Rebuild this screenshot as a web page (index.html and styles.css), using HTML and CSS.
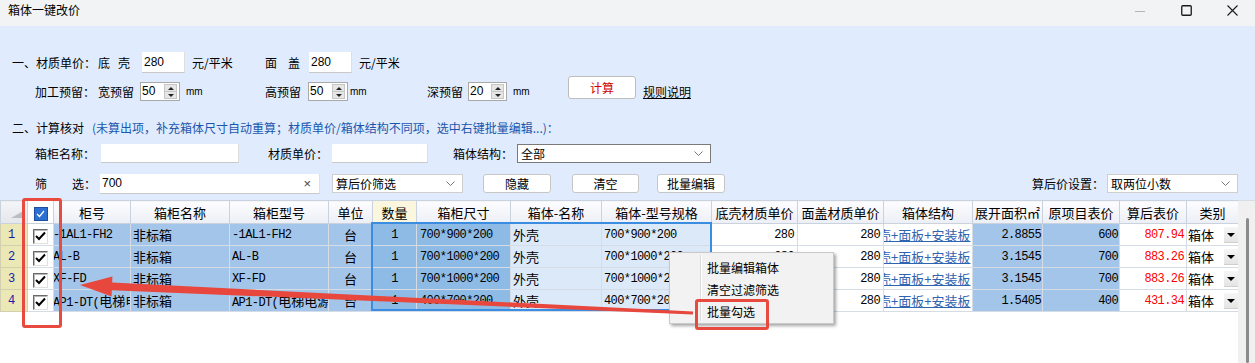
FILE: index.html
```html
<!DOCTYPE html>
<html lang="zh-CN">
<head>
    <meta charset="UTF-8">
    <title>箱体一键改价</title>
    <link rel="stylesheet" href="styles.css">
</head>
<body>
<div class="window">

    <div class="titlebar">
        <span class="title">箱体一键改价</span>
        <div class="win-btns">
            <span class="wb"><svg width="10" height="10" viewBox="0 0 10 10"><line x1="0" y1="5.5" x2="10" y2="5.5" stroke="#b4b4b4" stroke-width="1"/></svg></span>
            <span class="wb"><svg width="11" height="11" viewBox="0 0 11 11"><rect x="0.75" y="0.75" width="9.5" height="9.5" rx="1" fill="none" stroke="#1a1a1a" stroke-width="1.3"/></svg></span>
            <span class="wb"><svg width="11" height="11" viewBox="0 0 11 11"><path d="M0.5 0.5 L10.5 10.5 M10.5 0.5 L0.5 10.5" stroke="#1a1a1a" stroke-width="1.1"/></svg></span>
        </div>
    </div>

    <div class="panel">
        <!-- 一、材质单价 -->
        <div class="row row1">
            <span class="lbl w86">一、材质单价：</span>
            <span class="lbl w44 sp8">底壳</span>
            <span class="field w43 h21">280</span>
            <span class="lbl unit w80">元/平米</span>
            <span class="lbl w44 sp11">面盖</span>
            <span class="field w43 h21">280</span>
            <span class="lbl unit">元/平米</span>
        </div>

        <div class="row row2">
            <span class="lbl w63">加工预留：</span>
            <span class="lbl w42">宽预留</span>
            <div class="spin w40"><span class="sv">50</span><span class="sa"><i class="up"></i><i class="dn"></i></span></div>
            <span class="lbl mm w85">mm</span>
            <span class="lbl w43">高预留</span>
            <div class="spin w40"><span class="sv">50</span><span class="sa"><i class="up"></i><i class="dn"></i></span></div>
            <span class="lbl mm mm2 w79">mm</span>
            <span class="lbl w41">深预留</span>
            <div class="spin w39"><span class="sv">20</span><span class="sa"><i class="up"></i><i class="dn"></i></span></div>
            <span class="lbl mm w61">mm</span>
            <span class="btn btn-calc w68">计算</span>
            <a class="rule-link">规则说明</a>
        </div>

        <!-- 二、计算核对 -->
        <div class="row row3">
            <span class="lbl w80">二、计算核对</span>
            <span class="lbl tip">(未算出项，补充箱体尺寸自动重算；材质单价/箱体结构不同项，选中右键批量编辑...)：</span>
        </div>

        <div class="row row4">
            <span class="lbl w66">箱柜名称：</span>
            <span class="field w138 h19"></span>
            <span class="lbl w93 pl29">材质单价：</span>
            <span class="field w96 h19"></span>
            <span class="lbl w89 pl25">箱体结构：</span>
            <div class="sel sel-dark w194"><span>全部</span><svg width="9" height="5" viewBox="0 0 9 5"><path d="M0.5 0.5 L4.5 4.5 L8.5 0.5" fill="none" stroke="#777" stroke-width="1"/></svg></div>
        </div>

        <div class="row row5">
            <span class="lbl w37">筛</span>
            <span class="lbl w28">选：</span>
            <span class="field filter w220 h20"><span>700</span><span class="clr">×</span></span>
            <div class="sel w131 ml12"><span>算后价筛选</span><svg width="9" height="5" viewBox="0 0 9 5"><path d="M0.5 0.5 L4.5 4.5 L8.5 0.5" fill="none" stroke="#777" stroke-width="1"/></svg></div>
            <span class="btn w68 ml20">隐藏</span>
            <span class="btn w67 ml21">清空</span>
            <span class="btn w68 ml18">批量编辑</span>
            <span class="grow"></span>
            <span class="lbl w75">算后价设置：</span>
            <div class="sel w131"><span>取两位小数</span><svg width="9" height="5" viewBox="0 0 9 5"><path d="M0.5 0.5 L4.5 4.5 L8.5 0.5" fill="none" stroke="#777" stroke-width="1"/></svg></div>
        </div>
    </div>

    <div class="grid-area">
        <div class="grid-wrap">
            <table class="grid">
                <colgroup>
                    <col class="k27"><col class="k26"><col class="k77"><col class="k99"><col class="k99">
                    <col class="k44"><col class="k44"><col class="k94"><col class="k91"><col class="k110">
                    <col class="k86"><col class="k86"><col class="k89"><col class="k70"><col class="k77">
                    <col class="k67"><col class="k52">
                </colgroup>
                <thead>
                    <tr>
                        <th class="corner"><svg width="16" height="10" viewBox="0 0 16 10"><polygon points="1,9 15,9 15,1" fill="#b9bdc4"/></svg></th>
                        <th class="chk"><span class="cb-all"><svg width="9" height="8" viewBox="0 0 9 8"><path d="M1 4 L3.5 6.5 L8 1" fill="none" stroke="#fff" stroke-width="1.2"/></svg></span></th>
                        <th>柜号</th>
                        <th>箱柜名称</th>
                        <th>箱柜型号</th>
                        <th>单位</th>
                        <th class="hl">数量</th>
                        <th>箱柜尺寸</th>
                        <th>箱体-名称</th>
                        <th>箱体-型号规格</th>
                        <th>底壳材质单价</th>
                        <th>面盖材质单价</th>
                        <th>箱体结构</th>
                        <th>展开面积㎡</th>
                        <th>原项目表价</th>
                        <th>算后表价</th>
                        <th>类别</th>
                    </tr>
                </thead>
                <tbody>
                    <tr>
                        <td class="rh">1</td>
                        <td class="chk"><span class="cb"><svg width="11" height="10" viewBox="0 0 11 10"><path d="M1 5 L4 8 L10 1.5" fill="none" stroke="#000" stroke-width="2"/></svg></span></td>
                        <td class="a m cut">-1AL1-FH2</td>
                        <td class="a">非标箱</td>
                        <td class="a m">-1AL1-FH2</td>
                        <td class="a c">台</td>
                        <td class="b m c">1</td>
                        <td class="b m pl4">700*900*200</td>
                        <td class="l">外壳</td>
                        <td class="l m">700*900*200</td>
                        <td class="m r pr3">280</td>
                        <td class="m r pr3">280</td>
                        <td class="lnk">底壳+面板+安装板</td>
                        <td class="a m r">2.8855</td>
                        <td class="a m r">600</td>
                        <td class="m r red">807.94</td>
                        <td class="type"><div class="tw"><span>箱体</span><span class="dd"></span></div></td>
                    </tr>
                    <tr>
                        <td class="rh">2</td>
                        <td class="chk"><span class="cb"><svg width="11" height="10" viewBox="0 0 11 10"><path d="M1 5 L4 8 L10 1.5" fill="none" stroke="#000" stroke-width="2"/></svg></span></td>
                        <td class="a m cut">AL-B</td>
                        <td class="a">非标箱</td>
                        <td class="a m">AL-B</td>
                        <td class="a c">台</td>
                        <td class="b m c">1</td>
                        <td class="b m pl4">700*1000*200</td>
                        <td class="l">外壳</td>
                        <td class="l m">700*1000*200</td>
                        <td class="m r pr3">280</td>
                        <td class="m r pr3">280</td>
                        <td class="lnk">底壳+面板+安装板</td>
                        <td class="a m r">3.1545</td>
                        <td class="a m r">700</td>
                        <td class="m r red">883.26</td>
                        <td class="type"><div class="tw"><span>箱体</span><span class="dd"></span></div></td>
                    </tr>
                    <tr>
                        <td class="rh">3</td>
                        <td class="chk"><span class="cb"><svg width="11" height="10" viewBox="0 0 11 10"><path d="M1 5 L4 8 L10 1.5" fill="none" stroke="#000" stroke-width="2"/></svg></span></td>
                        <td class="a m cut">XF-FD</td>
                        <td class="a">非标箱</td>
                        <td class="a m">XF-FD</td>
                        <td class="a c">台</td>
                        <td class="b m c">1</td>
                        <td class="b m pl4">700*1000*200</td>
                        <td class="l">外壳</td>
                        <td class="l m">700*1000*200</td>
                        <td class="m r pr3">280</td>
                        <td class="m r pr3">280</td>
                        <td class="lnk">底壳+面板+安装板</td>
                        <td class="a m r">3.1545</td>
                        <td class="a m r">700</td>
                        <td class="m r red">883.26</td>
                        <td class="type"><div class="tw"><span>箱体</span><span class="dd"></span></div></td>
                    </tr>
                    <tr>
                        <td class="rh">4</td>
                        <td class="chk"><span class="cb"><svg width="11" height="10" viewBox="0 0 11 10"><path d="M1 5 L4 8 L10 1.5" fill="none" stroke="#000" stroke-width="2"/></svg></span></td>
                        <td class="a cut"><span class="mf">AP1-DT(</span>电梯电源)</td>
                        <td class="a">非标箱</td>
                        <td class="a"><span class="mf">AP1-DT(</span>电梯电源)</td>
                        <td class="a c">台</td>
                        <td class="b m c">1</td>
                        <td class="b m pl4">400*700*200</td>
                        <td class="l">外壳</td>
                        <td class="l m">400*700*200</td>
                        <td class="m r pr3">280</td>
                        <td class="m r pr3">280</td>
                        <td class="lnk">底壳+面板+安装板</td>
                        <td class="a m r">1.5405</td>
                        <td class="a m r">400</td>
                        <td class="m r red">431.34</td>
                        <td class="type"><div class="tw"><span>箱体</span><span class="dd"></span></div></td>
                    </tr>
                </tbody>
            </table>
        </div>
        <div class="vscroll"><div class="thumb"></div></div>
    </div>

    <!-- selection frame and right-click menu -->
    <div class="sel-frame"></div>

    <div class="ctx-menu">
        <div class="ctx-item">批量编辑箱体</div>
        <div class="ctx-item">清空过滤筛选</div>
        <div class="ctx-item">批量勾选</div>
    </div>

    <!-- annotations -->
    <div class="mark mark-col"></div>
    <div class="mark mark-item"></div>
    <svg class="arrow" width="1255" height="363" viewBox="0 0 1255 363">
        <polygon points="80,285 112.4,276.4 112.2,282.6 693.1,311.6 692.9,314.4 111.8,290.2 111.6,296.4" fill="#e8473d"/>
    </svg>

</div>
</body>
</html>
```

FILE: styles.css
```css
* {
    box-sizing: border-box;
}

body {
    margin: 0;
    font-family: "Noto Sans CJK SC", "Liberation Sans", sans-serif;
    font-size: 12px;
    color: #000;
    background: #fff;
}

.window {
    position: relative;
    width: 1255px;
    height: 363px;
    overflow: hidden;
    background: #fff;
}

/* title bar */
.titlebar {
    height: 26px;
    background: #f2f3f5;
    display: flex;
    align-items: flex-start;
}

.title {
    flex: 1;
    padding: 2px 0 0 8px;
    line-height: 16px;
    font-size: 12px;
}

.win-btns {
    display: flex;
}

.wb {
    width: 46px;
    height: 21px;
    display: flex;
    align-items: center;
    justify-content: center;
}

/* form panel */
.panel {
    background: #e0ecfd;
    height: 174px;
    padding-top: 25px;
}

.row {
    display: flex;
    align-items: center;
    white-space: nowrap;
}

.row1 {
    height: 23px;
    padding-left: 12px;
}

.row2 {
    height: 26px;
    margin-top: 2px;
    padding-left: 35px;
    align-items: flex-start;
}

.row2 .lbl,
.row2 .spin {
    margin-top: 6px;
}

.row3 {
    height: 20px;
    margin-top: 15px;
    padding-left: 12px;
}

.row4 {
    height: 23px;
    margin-top: 5px;
    padding-left: 35px;
}

.row5 {
    height: 23px;
    margin-top: 7px;
    padding-left: 35px;
    padding-right: 17px;
}

.lbl {
    display: inline-block;
    line-height: 19px;
    flex-shrink: 0;
}

.sp8 { letter-spacing: 8px; }
.sp11 { letter-spacing: 11px; }

.unit { padding-left: 7px; }
.mm {
    padding-left: 6px;
    font-family: "Liberation Sans", sans-serif;
    font-size: 10px;
    color: #000;
}
.mm2 { padding-left: 2px; }

.tip {
    color: #1a56ad;
}

.pl29 { padding-left: 29px; }
.pl25 { padding-left: 25px; }
.ml12 { margin-left: 12px; }
.ml18 { margin-left: 18px; }
.ml20 { margin-left: 20px; }
.ml21 { margin-left: 21px; }

.w28 { width: 28px; }
.w37 { width: 37px; }
.w39 { width: 39px; }
.w40 { width: 40px; }
.w41 { width: 41px; }
.w42 { width: 42px; }
.w43 { width: 43px; }
.w44 { width: 44px; }
.w61 { width: 61px; }
.w63 { width: 63px; }
.w66 { width: 66px; }
.w67 { width: 67px; }
.w68 { width: 68px; }
.w75 { width: 75px; }
.w79 { width: 79px; }
.w80 { width: 80px; }
.w85 { width: 85px; }
.w86 { width: 86px; }
.w89 { width: 89px; }
.w93 { width: 93px; }
.w96 { width: 96px; }
.w131 { width: 131px; }
.w138 { width: 138px; }
.w194 { width: 194px; }
.w220 { width: 220px; }

.h19 { height: 19px; }
.h20 { height: 20px; }
.h21 { height: 21px; }

.grow { flex: 1; }

.field {
    display: flex;
    align-items: center;
    flex-shrink: 0;
    background: #fff;
    border-bottom: 1px solid #c9c9c9;
    border-right: 1px solid #dedede;
    padding-left: 2px;
    font-family: "Liberation Sans", sans-serif;
    font-size: 12px;
}

.filter {
    justify-content: space-between;
    padding-right: 8px;
}

.clr {
    color: #444;
    font-size: 13px;
}

.spin {
    display: flex;
    flex-shrink: 0;
    height: 19px;
    background: #fff;
    border: 1px solid #a9a9a9;
    font-family: "Liberation Sans", sans-serif;
    font-size: 12px;
}

.sv {
    flex: 1;
    line-height: 17px;
    padding-left: 1px;
}

.sa {
    width: 13px;
    display: flex;
    flex-direction: column;
    margin: 1px 2px 1px 0;
}

.sa i {
    flex: 1;
    background: #e6e6e6;
    border: 1px solid #c6c6c6;
    position: relative;
}

.sa i.up { border-bottom: none; }

.sa i::after {
    content: "";
    position: absolute;
    left: 3px;
    top: 2px;
    border-left: 3px solid transparent;
    border-right: 3px solid transparent;
}

.sa i.up::after { border-bottom: 3px solid #222; }
.sa i.dn::after { border-top: 3px solid #222; top: 2px; }

.btn {
    display: inline-flex;
    align-items: center;
    justify-content: center;
    flex-shrink: 0;
    height: 19px;
    background: #fff;
    border: 1px solid #c6c6c6;
    border-radius: 3px;
    font-size: 12px;
}

.btn-calc {
    height: 23px;
    color: #d00000;
    font-size: 12px;
    border-color: #bdbdbd;
}

.rule-link {
    margin-left: 7px;
    margin-top: 6px;
    line-height: 19px;
    text-decoration: underline;
    color: #000;
}

.sel {
    display: flex;
    align-items: center;
    justify-content: space-between;
    flex-shrink: 0;
    height: 19px;
    background: #fff;
    border: 1px solid #cfcfcf;
    padding: 0 7px 0 3px;
    font-size: 12px;
}

.sel-dark {
    border-color: #7a7a7a;
}

/* grid */
.grid-area {
    display: flex;
    height: 163px;
}

.grid-wrap {
    width: 1238px;
    background: #fff;
}

.grid {
    width: 1238px;
    table-layout: fixed;
    border-collapse: collapse;
}

.k26 { width: 26px; }
.k27 { width: 27px; }
.k44 { width: 44px; }
.k52 { width: 52px; }
.k67 { width: 67px; }
.k70 { width: 70px; }
.k77 { width: 77px; }
.k86 { width: 86px; }
.k89 { width: 89px; }
.k91 { width: 91px; }
.k94 { width: 94px; }
.k99 { width: 99px; }
.k110 { width: 110px; }

.grid th,
.grid td {
    border: 1px solid #d5dce6;
    padding: 0 2px;
    overflow: hidden;
    white-space: nowrap;
    font-weight: normal;
    font-size: 13px;
}

.grid th {
    height: 22px;
    text-align: center;
    background: linear-gradient(#fdfdff, #eceff6);
    border-color: #cad2de;
}

.grid th.hl {
    background: #fbf6de;
}

.grid th.corner {
    background: linear-gradient(#f4f5f8, #e3e6ec);
    text-align: right;
    vertical-align: top;
    padding: 3px 1px 0 0;
}

.grid tbody tr {
    height: 22px;
}

.grid td.rh {
    background: #ece8b5;
    color: #1a1aa8;
    font-family: "Liberation Mono", monospace;
    font-size: 12px;
    padding-left: 7px;
    border-color: #d3d0b0;
}

.grid .chk {
    text-align: center;
    background: #fff;
    padding: 0;
}

.cb-all {
    display: inline-flex;
    align-items: center;
    justify-content: center;
    width: 14px;
    height: 14px;
    background: #2d6fd1;
    border: 1px solid #1d4f9e;
    vertical-align: middle;
}

.cb {
    display: inline-flex;
    align-items: center;
    justify-content: center;
    width: 15px;
    height: 15px;
    background: #fff;
    border: 1px solid;
    border-color: #6a6a6a #e0e0e0 #e0e0e0 #6a6a6a;
    box-shadow: inset 1px 1px 0 #b8b8b8;
    vertical-align: middle;
}

.grid td.a { background: #a3c5e9; }
.grid td.b { background: #8ebbe6; }
.grid td.l { background: #dce9f8; }

.grid td.m,
.mf {
    font-family: "Liberation Mono", monospace;
    font-size: 12px;
    letter-spacing: -0.6px;
}

.grid td.c { text-align: center; }
.grid td.r { text-align: right; padding-right: 1px; }
.grid td.pr3 { padding-right: 3px; }
.grid td.pl4 { padding-left: 3px; }
.grid td.cut { text-indent: -3px; }

.grid td.red {
    color: #ff0000;
    padding-right: 2px;
}

.grid td.lnk {
    color: #2f64b0;
    text-decoration: underline;
    text-indent: -21px;
}

.grid td.type {
    padding: 0 0 0 1px;
}

.tw {
    display: flex;
    align-items: center;
    justify-content: space-between;
}

.dd {
    position: relative;
    width: 14px;
    height: 16px;
    background: linear-gradient(#f6f6f6, #e4e4e4);
    border-bottom: 1px solid #cfcfcf;
}

.dd::after {
    content: "";
    position: absolute;
    left: 3px;
    top: 6px;
    border-left: 4px solid transparent;
    border-right: 4px solid transparent;
    border-top: 4px solid #000;
}

.vscroll {
    width: 17px;
    background: #f0f0f0;
    border-top: 1px solid #d8dde5;
    padding: 17px 0 0 8px;
}

.thumb {
    width: 3px;
    height: 100%;
    background: #8a8a8a;
    border-radius: 2px;
}

/* overlays */
.sel-frame {
    position: absolute;
    left: 371px;
    top: 222px;
    width: 341px;
    height: 89px;
    border: 2px solid #3a8de0;
}

.ctx-menu {
    position: absolute;
    left: 669px;
    top: 252px;
    width: 165px;
    height: 72px;
    padding-top: 4px;
    background: #f2f2f2;
    border: 1px solid #c9c9c9;
    box-shadow: 2px 2px 3px rgba(0, 0, 0, 0.35);
}

.ctx-menu::before {
    content: "";
    position: absolute;
    left: 30px;
    top: 2px;
    bottom: 2px;
    border-left: 1px solid #dadada;
    border-right: 1px solid #fff;
}

.ctx-item {
    height: 22px;
    line-height: 22px;
    padding-left: 37px;
    font-size: 12px;
}

.mark {
    position: absolute;
    border: 3px solid #e84a3f;
    border-radius: 3px;
}

.mark-col {
    left: 22px;
    top: 198px;
    width: 40px;
    height: 130px;
}

.mark-item {
    left: 695px;
    top: 299px;
    width: 74px;
    height: 31px;
}

.arrow {
    position: absolute;
    left: 0;
    top: 0;
    pointer-events: none;
}
```
